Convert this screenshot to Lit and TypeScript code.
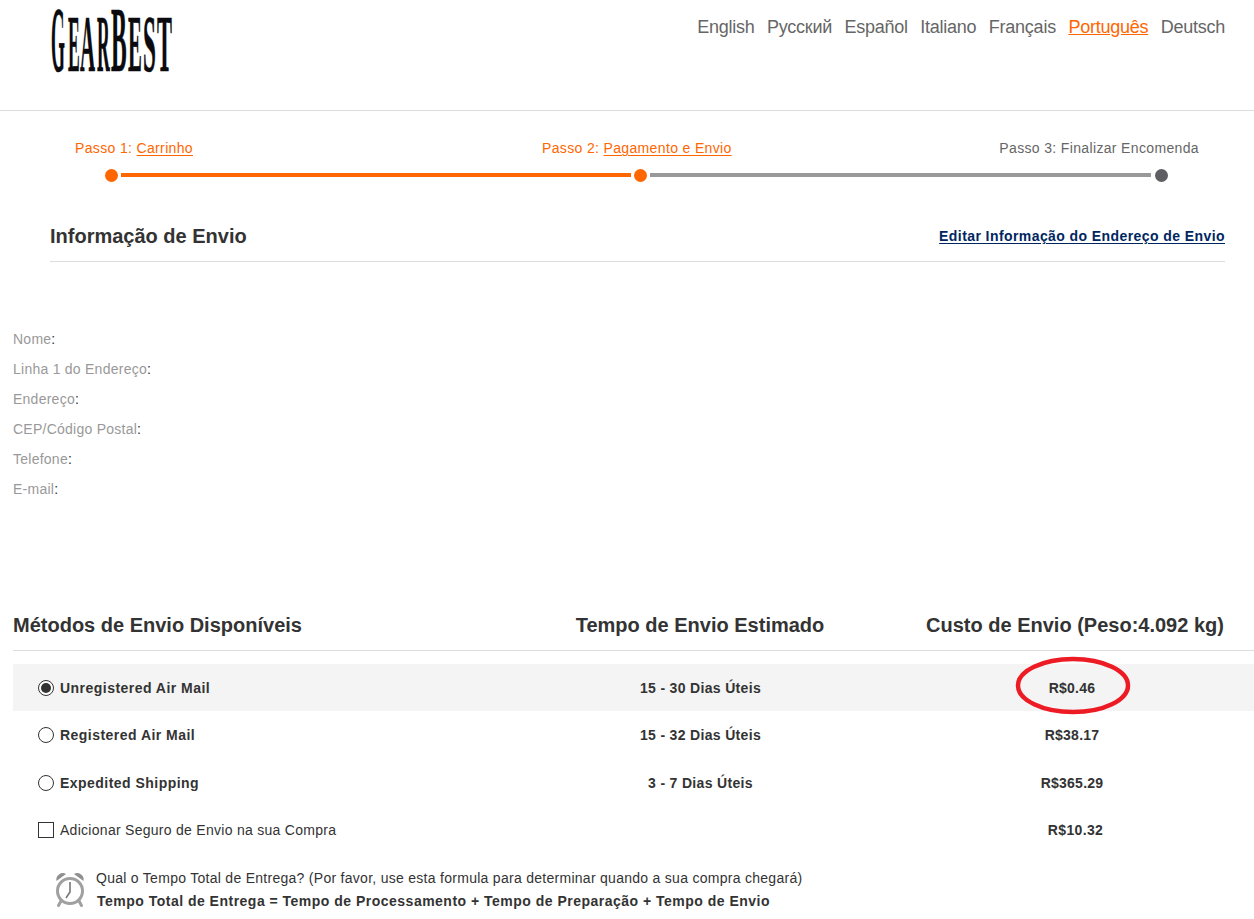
import { LitElement, html, css, svg } from "lit";
import { customElement } from "lit/decorators.js";

const LANGS = ["English", "Русский", "Español", "Italiano", "Français", "Português", "Deutsch"];
const ADDRESS = ["Nome", "Linha 1 do Endereço", "Endereço", "CEP/Código Postal", "Telefone", "E-mail"];
const METHODS = [
  { name: "Unregistered Air Mail", time: "15 - 30 Dias Úteis", cost: "R$0.46", on: true },
  { name: "Registered Air Mail", time: "15 - 32 Dias Úteis", cost: "R$38.17", on: false },
  { name: "Expedited Shipping", time: "3 - 7 Dias Úteis", cost: "R$365.29", on: false },
];

// letter, x, font size, horizontal squeeze
const logoLetters: [string, number, number, number][] = [
  ["G", 1, 94, 0.19], ["E", 18, 80, 0.22], ["A", 30, 80, 0.26], ["R", 47, 80, 0.22],
  ["B", 61, 94, 0.25], ["E", 78, 80, 0.26], ["S", 93, 80, 0.29], ["T", 107, 80, 0.28],
];

@customElement("app-root")
export class AppRoot extends LitElement {
  static styles = css`
    :host { display: block; height: 919px; overflow: hidden; background: #fff; color: #333;
      font-family: "Liberation Sans", Arial, sans-serif; font-size: 14px; }
    .top { height: 110px; border-bottom: 1px solid #ddd; display: flex; justify-content: space-between;
      padding: 0 29px 0 50px; }
    .logo { display: block; margin-top: 9px; overflow: visible; }
    .logo text { font-family: "Liberation Serif", serif; font-weight: 700; fill: #0b0b0f;
      stroke: #0b0b0f; stroke-width: 0.5; vector-effect: non-scaling-stroke; }
    .langs { display: flex; gap: 12.5px; font-size: 18px; letter-spacing: -0.25px; color: #666; padding-top: 17px; line-height: 21px; align-items: flex-start; }
    .langs .cur { color: #ff6600; text-decoration: underline; }
    .labels { display: grid; grid-template-columns: 467px 1fr auto; padding: 29px 55px 0 75px; line-height: 16px; color: #666; letter-spacing: 0.35px; }
    .labels .on { color: #ff6600; }
    .labels u { text-underline-offset: 2px; }
    .track { display: flex; align-items: center; padding: 13px 86px 0 105px; height: 13px; }
    .dot { width: 13px; height: 13px; border-radius: 50%; background: #ff6600; flex: none; }
    .dot.off { background: #5f5f63; }
    .line { height: 4px; background: #ff6600; flex: 1; margin: 0 3px 1px; }
    .line.a { flex: none; width: 510px; }
    .line.off { background: #999; margin: 0 4px 1px 3px; }
    .head { display: flex; justify-content: space-between; align-items: center; margin: 34px 29px 0 50px;
      height: 45px; border-bottom: 1px solid #ddd; }
    .head h2 { margin: 0; font-size: 20px; line-height: 24px; font-weight: 700; color: #333; padding-bottom: 5px; }
    .head a { font-size: 14px; font-weight: 700; color: #00265f; text-decoration: underline; padding-bottom: 5px; text-underline-offset: 2px; letter-spacing: 0.42px; }
    .addr { padding: 62px 0 0 13px; letter-spacing: 0.25px; }
    .addr div { line-height: 30px; height: 30px; color: #333; }
    .addr span { color: #999; }
    .th { display: grid; grid-template-columns: 500px 374px 367px; margin: 102px 0 0 13px; align-items: center;
      border-bottom: 1px solid #ddd; font-size: 20px; font-weight: 700; line-height: 24px; padding-bottom: 6px; height: 38px; }
    .th div:nth-child(n+2), .row div:nth-child(n+2) { text-align: center; }
    .th div:nth-child(3) { padding-left: 9px; }
    .rows { margin: 13px 0 0 13px; }
    .row { position: relative; display: grid; grid-template-columns: 500px 375px 368px; height: 47.5px; align-items: center;
      font-weight: 700; }
    .row.sel { background: #f4f4f4; height: 47px; margin-bottom: 0.5px; }
    .name { display: flex; align-items: center; gap: 6px; padding-left: 25px; letter-spacing: 0.47px; }
    .time { letter-spacing: 0.33px; }
    .cost { letter-spacing: 0.25px; }
    .radio { width: 16px; height: 16px; border: 1.4px solid #333; border-radius: 50%; box-sizing: border-box; background: #fff; display: flex; align-items: center; justify-content: center; flex: none; }
    .radio.on::after { content: ""; width: 10px; height: 10px; border-radius: 50%; background: #333; }
    .box { width: 16px; height: 16px; border: 1px solid #333; box-sizing: border-box; flex: none; }
    .normal { font-weight: 400; letter-spacing: 0.28px; }
    .row .shift { padding-left: 7px; letter-spacing: 0.35px; }
    .ring { position: absolute; left: 1002px; top: -9px; pointer-events: none; }
    .note { display: flex; gap: 10px; padding: 13px 0 0 54px; line-height: 23px; letter-spacing: 0.28px; }
    .note svg { flex: none; margin-top: 4px; }
    .note b { display: block; padding-left: 1px; letter-spacing: 0.49px; }
  `;

  private logo() {
    return html`<svg class="logo" width="125" height="66" viewBox="0 0 125 66" aria-label="GearBest">
      ${logoLetters.map(([c, x, s, sx]) => svg`<text transform="translate(${x} 62) scale(${sx} 1)" font-size=${s}>${c}</text>`)}
    </svg>`;
  }

  private clock() {
    return html`<svg width="32" height="38" viewBox="0 0 32 38" fill="none">
      <path d="M2.5 10 A6.5 6.5 0 0 1 12 3 Z M29.5 10 A6.5 6.5 0 0 0 20 3 Z" fill="#8f8f8f"/>
      <circle cx="16" cy="20" r="12.5" stroke="#a0a0a0" stroke-width="3" fill="#fff"/>
      <path d="M16 11 V21 L12 27" stroke="#777" stroke-width="1.6"/>
      <path d="M7 30 L4.5 34.5 M25 30 L27.5 34.5" stroke="#a0a0a0" stroke-width="3" stroke-linecap="round"/>
    </svg>`;
  }

  render() {
    return html`
      <div class="top">
        ${this.logo()}
        <nav class="langs">${LANGS.map((l) => html`<span class=${l === "Português" ? "cur" : ""}>${l}</span>`)}</nav>
      </div>
      <div class="labels">
        <span class="on">Passo 1: <u>Carrinho</u></span>
        <span class="on">Passo 2: <u>Pagamento e Envio</u></span>
        <span>Passo 3: Finalizar Encomenda</span>
      </div>
      <div class="track">
        <span class="dot"></span><span class="line a"></span><span class="dot"></span><span class="line off"></span><span class="dot off"></span>
      </div>
      <div class="head"><h2>Informação de Envio</h2><a>Editar Informação do Endereço de Envio</a></div>
      <div class="addr">${ADDRESS.map((a) => html`<div><span>${a}</span>:</div>`)}</div>
      <div class="th"><div>Métodos de Envio Disponíveis</div><div>Tempo de Envio Estimado</div><div>Custo de Envio (Peso:4.092 kg)</div></div>
      <div class="rows">
        ${METHODS.map((m) => html`
          <div class="row ${m.on ? "sel" : ""}">
            <div class="name"><span class="radio ${m.on ? "on" : ""}"></span>${m.name}</div>
            <div class="time">${m.time}</div>
            <div class="cost">${m.cost}</div>
            ${m.on ? html`<svg class="ring" width="118" height="62" viewBox="0 0 118 62" fill="none"><ellipse cx="58" cy="30.5" rx="55" ry="26.5" stroke="#ed1c24" stroke-width="4.5"/></svg>` : ""}
          </div>`)}
        <div class="row">
          <div class="name"><span class="box"></span><span class="normal">Adicionar Seguro de Envio na sua Compra</span></div>
          <div></div>
          <div class="shift">R$10.32</div>
        </div>
      </div>
      <div class="note">
        ${this.clock()}
        <div>Qual o Tempo Total de Entrega? (Por favor, use esta formula para determinar quando a sua compra chegará)
          <b>Tempo Total de Entrega = Tempo de Processamento + Tempo de Preparação + Tempo de Envio</b></div>
      </div>
    `;
  }
}
